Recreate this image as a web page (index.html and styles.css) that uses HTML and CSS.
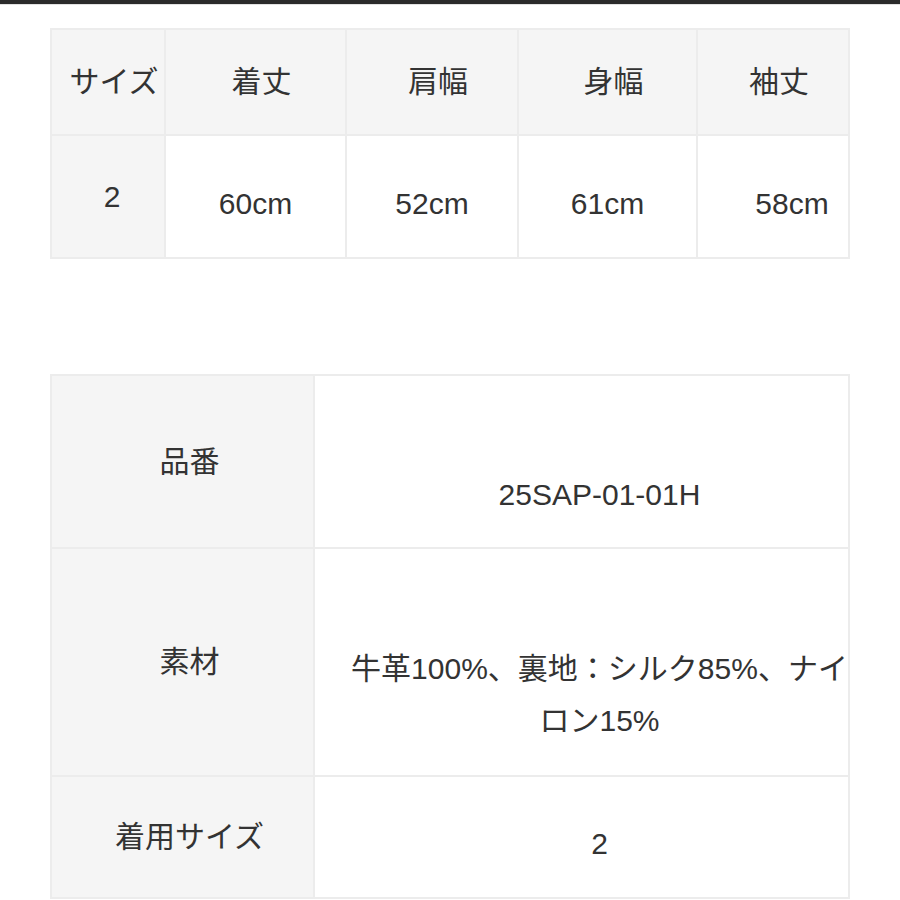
FILE: index.html
```html
<!DOCTYPE html>
<html lang="ja">
<head>
<meta charset="utf-8">
<title>サイズ表</title>
<link rel="stylesheet" href="styles.css">
</head>
<body>
<div class="topbar"></div>
<main class="page">
  <table class="size-table">
    <colgroup>
      <col class="c1"><col class="c2"><col class="c3"><col class="c4"><col class="c5">
    </colgroup>
    <tr class="head-row">
      <th class="h h-size">サイズ</th>
      <th class="h">着丈</th>
      <th class="h">肩幅</th>
      <th class="h">身幅</th>
      <th class="h">袖丈</th>
    </tr>
    <tr class="data-row">
      <th class="size-val">2</th>
      <td class="m">60cm</td>
      <td class="m">52cm</td>
      <td class="m">61cm</td>
      <td class="m m-last">58cm</td>
    </tr>
  </table>

  <table class="spec-table">
    <colgroup>
      <col class="s1"><col class="s2">
    </colgroup>
    <tr class="r-code">
      <th class="label">品番</th>
      <td class="value v-shift">25SAP-01-01H</td>
    </tr>
    <tr class="r-material">
      <th class="label">素材</th>
      <td class="value v-shift">牛革100%、裏地：シルク85%、ナイロン15%</td>
    </tr>
    <tr class="r-fit">
      <th class="label">着用サイズ</th>
      <td class="value v-small">2</td>
    </tr>
  </table>
</main>
</body>
</html>
```

FILE: styles.css
```css
html, body {
  margin: 0;
  padding: 0;
  background: #ffffff;
}

body {
  font-family: "Liberation Sans", "Noto Sans CJK JP", sans-serif;
  font-size: 30px;
  line-height: 52px;
  color: #333333;
}

.topbar {
  height: 4px;
  background: #2b2b2b;
  border-bottom: 1px solid #e2e2e2;
}

.page {
  padding: 0 50px;
}

table {
  width: 800px;
  box-sizing: border-box;
  table-layout: fixed;
  border-collapse: separate;
  border-spacing: 0;
  border-top: 2px solid #ececec;
  border-left: 2px solid #ececec;
}

th, td {
  border-right: 2px solid #ececec;
  border-bottom: 2px solid #ececec;
  padding: 0;
  font-weight: normal;
  text-align: center;
  vertical-align: middle;
}

th {
  background: #f5f5f5;
}

td {
  background: #ffffff;
}

/* size table */
.size-table {
  margin-top: 23px;
}

.c1 { width: 114px; }
.c2 { width: 181px; }
.c3 { width: 172px; }
.c4 { width: 179px; }
.c5 { width: 152px; }

.head-row {
  height: 106px;
}

.head-row .h {
  padding-left: 12px;
}

.data-row {
  height: 123px;
}

.size-val {
  padding-left: 8px;
}

.m {
  padding-top: 14px;
}

.m-last {
  padding-left: 38px;
}

/* spec table */
.spec-table {
  margin-top: 115px;
}

.s1 { width: 263px; }
.s2 { width: 535px; }

.r-code { height: 173px; }
.r-material { height: 228px; }
.r-fit { height: 122px; }

.label {
  padding-left: 14px;
}

.value {
  padding-left: 36px;
  padding-right: 0;
}

.v-shift {
  padding-top: 66px;
}

.v-small {
  padding-top: 14px;
}
```
